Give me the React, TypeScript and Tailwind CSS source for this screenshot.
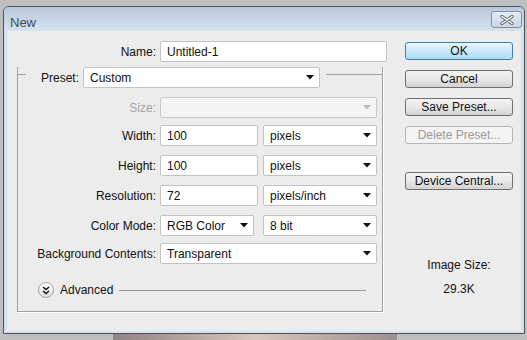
import React from 'react';

// small black triangle used by every combo box
const Arrow = ({ disabled = false }: { disabled?: boolean }) => (
  <svg width="8" height="5" viewBox="0 0 8 5" className="shrink-0">
    <path d="M0 0 L8 0 L4 4.5 Z" fill={disabled ? '#b9b9b9' : '#111'} />
  </svg>
);

const Input = ({ w, value }: { w: string; value: string }) => (
  <div className={`${w} h-[21px] bg-white border border-[#c3c3c3] rounded-[2px] pl-[6px] flex items-center text-[12px] text-[#111]`}>
    {value}
  </div>
);

const Select = ({ w, value, disabled = false }: { w: string; value?: string; disabled?: boolean }) => (
  <div
    className={`${w} h-[21px] border rounded-[2px] pl-[6px] pr-[5px] flex items-center justify-between text-[12px] ${
      disabled ? 'bg-[#f4f4f4] border-[#c8c8c8]' : 'bg-white border-[#c3c3c3] text-[#111]'
    }`}
  >
    <span>{value}</span>
    <Arrow disabled={disabled} />
  </div>
);

const Button = ({ label, primary = false, disabled = false }: { label: string; primary?: boolean; disabled?: boolean }) => {
  let cls = 'border-[#707070] bg-gradient-to-b from-[#f3f3f3] via-[#e9e9e9] to-[#d2d2d2] text-[#111]';
  if (primary) cls = 'border-[#3c7fb1] bg-gradient-to-b from-[#e8f5fd] via-[#cfeafc] to-[#a9dbf6] text-[#111]';
  if (disabled) cls = 'border-[#b5b5b5] bg-[#f4f4f4] text-[#9a9a9a]';
  return (
    <div className={`w-[108px] h-[18px] border rounded-[3px] flex items-center justify-center text-[12px] ${cls}`}>
      {label}
    </div>
  );
};

// label column + control(s)
const Row = ({ label, dim = false, mt, children }: { label: string; dim?: boolean; mt: string; children: React.ReactNode }) => (
  <div className={`flex items-center ${mt}`}>
    <span className={`w-[138px] text-right text-[12px] ${dim ? 'text-[#a3a3a3]' : 'text-[#111]'}`}>{label}</span>
    <div className="ml-[4px] flex items-center gap-[5px]">{children}</div>
  </div>
);

export default function App() {
  return (
    <div className="w-[527px] h-[340px] bg-[#bfbfbf] pt-[6px] pl-[3px] overflow-hidden font-['Liberation_Sans',Arial,sans-serif]">
      <div className="w-[522px] h-[328px] border border-[#4f5357] rounded-t-[6px] bg-[#d5e1ee] flex flex-col overflow-hidden">
        {/* title bar */}
        <div className="h-[24px] shrink-0 bg-gradient-to-b from-[#b8c9dc] to-[#d6e2ef] flex justify-between items-start pl-[6px] pr-[2px]">
          <span className="mt-[6px] text-[13px] text-[#3d4b5b]">New</span>
          <div className="mt-[4px] w-[31px] h-[17px] border border-[#8292a4] rounded-[3px] bg-gradient-to-b from-[#e4ecf4] to-[#c9d6e4] flex items-center justify-center">
            <svg width="14" height="10" viewBox="0 0 14 10">
              <path d="M2 1.5 L12 8.5 M12 1.5 L2 8.5" stroke="#5a6470" strokeWidth="3.2" strokeLinecap="round" />
              <path d="M2 1.5 L12 8.5 M12 1.5 L2 8.5" stroke="#fff" strokeWidth="1.4" strokeLinecap="round" />
            </svg>
          </div>
        </div>

        {/* client area */}
        <div className="h-[300px] mx-[3px] bg-[#ececec] flex">
          <div className="w-[398px]">
            <div className="flex items-center mt-[10px]">
              <span className="w-[149px] text-right text-[12px] text-[#111]">Name:</span>
              <div className="ml-[4px]">
                <Input w="w-[227px]" value="Untitled-1" />
              </div>
            </div>

            {/* preset group box */}
            <div className="ml-[10px] mt-[12px] w-[366px] h-[245px] border-l border-r border-b border-[#a0a0a0] shadow-[1px_1px_0_#fff]">
              <div className="flex items-start -mt-[7px]">
                <div className="w-[8px] mt-[7px] border-t border-[#a0a0a0]" />
                <span className="w-[57px] h-[21px] flex items-center justify-end pr-[4px] text-[12px] text-[#111]">Preset:</span>
                <Select w="w-[237px]" value="Custom" />
                <div className="flex-1 ml-[6px] mt-[7px] border-t border-[#a0a0a0]" />
              </div>

              <Row label="Size:" dim mt="mt-[9px]">
                <Select w="w-[217px]" disabled />
              </Row>
              <Row label="Width:" mt="mt-[7px]">
                <Input w="w-[98px]" value="100" />
                <Select w="w-[114px]" value="pixels" />
              </Row>
              <Row label="Height:" mt="mt-[9px]">
                <Input w="w-[98px]" value="100" />
                <Select w="w-[114px]" value="pixels" />
              </Row>
              <Row label="Resolution:" mt="mt-[9px]">
                <Input w="w-[98px]" value="72" />
                <Select w="w-[114px]" value="pixels/inch" />
              </Row>
              <Row label="Color Mode:" mt="mt-[9px]">
                <Select w="w-[94px]" value="RGB Color" />
                <div className="ml-[4px]">
                  <Select w="w-[114px]" value="8 bit" />
                </div>
              </Row>
              <Row label="Background Contents:" mt="mt-[7px]">
                <Select w="w-[217px]" value="Transparent" />
              </Row>

              <div className="flex items-center mt-[18px] pl-[20px] h-[16px]">
                <div className="w-[16px] h-[16px] rounded-full border border-[#a5a5a5] bg-gradient-to-b from-white to-[#dcdcdc] flex items-center justify-center">
                  <svg width="8" height="9" viewBox="0 0 8 9">
                    <path d="M1 1 L4 3.5 L7 1 M1 5 L4 7.5 L7 5" stroke="#111" strokeWidth="1.4" fill="none" />
                  </svg>
                </div>
                <span className="ml-[6px] text-[12px] text-[#111]">Advanced</span>
                <div className="ml-[6px] w-[247px] border-t border-[#999]" />
              </div>
            </div>
          </div>

          {/* buttons */}
          <div className="w-[108px] flex flex-col">
            <div className="mt-[11px]">
              <Button label="OK" primary />
            </div>
            <div className="mt-[10px]">
              <Button label="Cancel" />
            </div>
            <div className="mt-[10px]">
              <Button label="Save Preset..." />
            </div>
            <div className="mt-[10px]">
              <Button label="Delete Preset..." disabled />
            </div>
            <div className="mt-[28px]">
              <Button label="Device Central..." />
            </div>
            <div className="mt-[68px] text-center text-[12px] text-[#111] leading-[15px]">Image Size:</div>
            <div className="mt-[9px] text-center text-[12px] text-[#111] leading-[15px]">29.3K</div>
          </div>
        </div>
      </div>
      {/* part of the canvas behind the dialog */}
      <div className="ml-[110px] w-[284px] h-[10px] bg-gradient-to-r from-[#8f8383] via-[#d9c6bd] to-[#9c9090]" />
    </div>
  );
}
